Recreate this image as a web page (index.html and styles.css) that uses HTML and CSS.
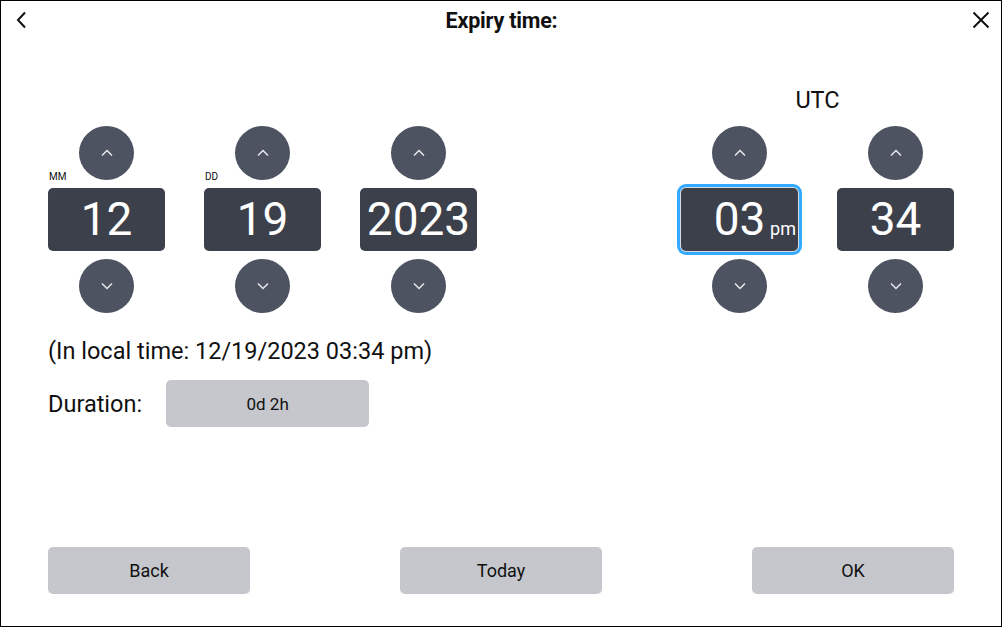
FILE: index.html
```html
<!DOCTYPE html>
<html>
<head>
	<title>Expiry time</title>
	<link rel="stylesheet" href="styles.css">
</head>
<body>
<div class="screen">
	<div class="header">
		<span class="icon back">
			<svg width="14" height="18" viewBox="0 0 14 18"><path d="M10 1.5 L3 9 L10 16.5" fill="none" stroke="#111" stroke-width="2"/></svg>
		</span>
		<h1>Expiry time:</h1>
		<span class="icon close">
			<svg width="18" height="18" viewBox="0 0 18 18"><path d="M1.5 1.5 L16.5 16.5 M16.5 1.5 L1.5 16.5" fill="none" stroke="#111" stroke-width="2"/></svg>
		</span>
	</div>

	<div class="pickers">
		<div class="group">
			<div class="spin">
				<div class="arrow"><svg width="12" height="8" viewBox="0 0 12 8"><path d="M1 6.5 L6 1.5 L11 6.5" fill="none" stroke="#e8e9ec" stroke-width="1.5"/></svg></div>
				<div class="box"><span class="tag">MM</span>12</div>
				<div class="arrow"><svg width="12" height="8" viewBox="0 0 12 8"><path d="M1 1.5 L6 6.5 L11 1.5" fill="none" stroke="#e8e9ec" stroke-width="1.5"/></svg></div>
			</div>
			<div class="spin">
				<div class="arrow"><svg width="12" height="8" viewBox="0 0 12 8"><path d="M1 6.5 L6 1.5 L11 6.5" fill="none" stroke="#e8e9ec" stroke-width="1.5"/></svg></div>
				<div class="box"><span class="tag">DD</span>19</div>
				<div class="arrow"><svg width="12" height="8" viewBox="0 0 12 8"><path d="M1 1.5 L6 6.5 L11 1.5" fill="none" stroke="#e8e9ec" stroke-width="1.5"/></svg></div>
			</div>
			<div class="spin">
				<div class="arrow"><svg width="12" height="8" viewBox="0 0 12 8"><path d="M1 6.5 L6 1.5 L11 6.5" fill="none" stroke="#e8e9ec" stroke-width="1.5"/></svg></div>
				<div class="box">2023</div>
				<div class="arrow"><svg width="12" height="8" viewBox="0 0 12 8"><path d="M1 1.5 L6 6.5 L11 1.5" fill="none" stroke="#e8e9ec" stroke-width="1.5"/></svg></div>
			</div>
		</div>

		<div class="time">
			<div class="utc">UTC</div>
			<div class="group">
				<div class="spin">
					<div class="arrow"><svg width="12" height="8" viewBox="0 0 12 8"><path d="M1 6.5 L6 1.5 L11 6.5" fill="none" stroke="#e8e9ec" stroke-width="1.5"/></svg></div>
					<div class="box focused">03<span class="ampm">pm</span></div>
					<div class="arrow"><svg width="12" height="8" viewBox="0 0 12 8"><path d="M1 1.5 L6 6.5 L11 1.5" fill="none" stroke="#e8e9ec" stroke-width="1.5"/></svg></div>
				</div>
				<div class="spin">
					<div class="arrow"><svg width="12" height="8" viewBox="0 0 12 8"><path d="M1 6.5 L6 1.5 L11 6.5" fill="none" stroke="#e8e9ec" stroke-width="1.5"/></svg></div>
					<div class="box">34</div>
					<div class="arrow"><svg width="12" height="8" viewBox="0 0 12 8"><path d="M1 1.5 L6 6.5 L11 1.5" fill="none" stroke="#e8e9ec" stroke-width="1.5"/></svg></div>
				</div>
			</div>
		</div>
	</div>

	<p class="local">(In local time: 12/19/2023 03:34 pm)</p>
	<div class="duration">
		<span>Duration:</span>
		<button class="btn dur">0d 2h</button>
	</div>

	<div class="footer">
		<button class="btn">Back</button>
		<button class="btn">Today</button>
		<button class="btn">OK</button>
	</div>
</div>
</body>
</html>
```

FILE: styles.css
```css
html, body{
	margin: 0;
	background-color: #fff;
}
.screen{
	width: 1002px;
	height: 627px;
	box-sizing: border-box;
	border: 1px solid #000;
	display: flex;
	flex-direction: column;
	padding: 0 47px 32px 47px;
	font-family: Roboto, "Liberation Sans", sans-serif;
	color: #111;
}
.header{
	height: 38px;
	margin: 0 -47px;
	padding: 0 11px 0 12px;
	display: flex;
	align-items: center;
	justify-content: space-between;
}
.header h1{
	margin: 0;
	font-size: 21.5px;
	font-weight: bold;
	letter-spacing: -0.2px;
}
.icon{
	width: 18px;
	height: 18px;
	display: flex;
	align-items: center;
	justify-content: center;
}
.pickers{
	margin-top: 48px;
	display: flex;
	justify-content: space-between;
	align-items: flex-end;
}
.group{
	display: flex;
	gap: 39px;
}
.time{
	display: flex;
	flex-direction: column;
	align-items: center;
}
.utc{
	font-size: 23.5px;
	line-height: 26px;
	margin-bottom: 13px;
}
.spin{
	width: 117px;
	display: flex;
	flex-direction: column;
	align-items: center;
	gap: 8px;
}
.arrow{
	width: 55px;
	height: 54px;
	border-radius: 50%;
	background-color: #4e5361;
	display: flex;
	align-items: center;
	justify-content: center;
}
.box{
	position: relative;
	width: 117px;
	height: 63px;
	border-radius: 5px;
	background-color: #3c404b;
	color: #fff;
	font-size: 46px;
	line-height: 63px;
	text-align: center;
}
.box.focused{
	box-shadow: 0 0 0 1px #d8dbe0, 0 0 0 4px #33a9ff;
}
.tag{
	position: absolute;
	left: 1px;
	top: -17px;
	font-size: 10px;
	line-height: 12px;
	color: #111;
}
.ampm{
	position: absolute;
	right: 2px;
	bottom: 13px;
	font-size: 18px;
	line-height: 18px;
}
.local{
	margin: 25px 0 0 0;
	font-size: 23.5px;
	line-height: 27px;
}
.duration{
	margin-top: 15px;
	display: flex;
	align-items: center;
	gap: 24px;
	font-size: 23.5px;
}
.btn{
	width: 202px;
	height: 47px;
	border: 0;
	border-radius: 5px;
	background-color: #c5c7cc;
	color: #111;
	font-family: Roboto, "Liberation Sans", sans-serif;
	font-size: 18px;
	padding: 0;
}
.btn.dur{
	width: 203px;
	font-size: 17px;
}
.footer{
	margin-top: auto;
	display: flex;
	justify-content: space-between;
}
```
